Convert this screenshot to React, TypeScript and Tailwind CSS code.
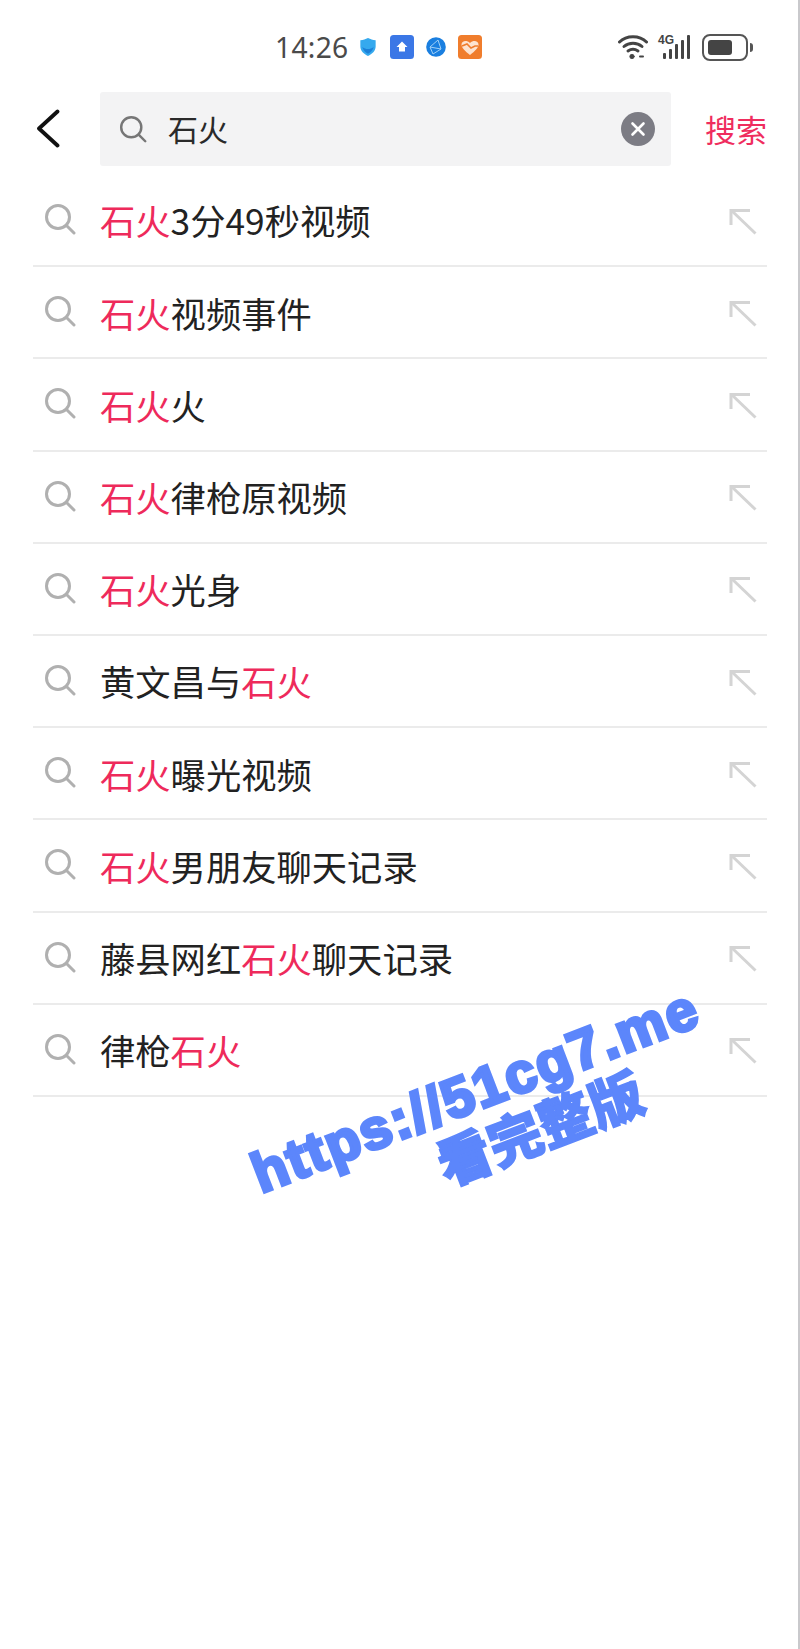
const font = { fontFamily: '"Noto Sans CJK SC", "Liberation Sans", sans-serif' };

function SearchIcon({ size, color, sw, className }: { size: number; color: string; sw: number; className?: string }) {
  return (
    <svg className={className} width={size} height={size} viewBox="0 0 32 32" fill="none" stroke={color} strokeWidth={sw} strokeLinecap="round">
      <circle cx="14" cy="14" r="11.5" />
      <path d="M23 23l7 7" />
    </svg>
  );
}

function Arrow() {
  return (
    <svg className="mt-[2px]" width="28" height="27" viewBox="0 0 28 27" fill="none" stroke="#d4d4d4" strokeWidth="3">
      <path d="M2 17V2.500H21" />
      <path d="M3 3l23.500 22.500" />
    </svg>
  );
}

const rows: [string, string, string][] = [
  ["", "石火", "3分49秒视频"],
  ["", "石火", "视频事件"],
  ["", "石火", "火"],
  ["", "石火", "律枪原视频"],
  ["", "石火", "光身"],
  ["黄文昌与", "石火", ""],
  ["", "石火", "曝光视频"],
  ["", "石火", "男朋友聊天记录"],
  ["藤县网红", "石火", "聊天记录"],
  ["律枪", "石火", ""],
];

function StatusBar() {
  return (
    <div className="flex h-[92px] items-center pt-[2px]">
      <span className="ml-[275px] w-[84px] text-[28.200px] leading-none tracking-[0.300px] text-[#4a4a4a]" style={{ fontFamily: '"Noto Sans", sans-serif' }}>14:26</span>
      <svg width="18" height="20" viewBox="0 0 20 22">
        <path d="M10 1c3 1.500 5 2 8.500 2.500v7c0 5-4 8.500-8.500 10.500-4.500-2-8.500-5.500-8.500-10.500v-7C5 3 7 2.500 10 1z" fill="#35a9ee" />
        <path d="M4 11c3 3 9 3 12 0v1c-1 3-3.500 5-6 6.500-2.500-1.500-5-3.500-6-6.500z" fill="#1c80d8" />
      </svg>
      <svg className="ml-[13px]" width="24" height="24" viewBox="0 0 24 24">
        <rect width="24" height="24" rx="3.500" fill="#3b77e6" />
        <path d="M12 6.500l5.500 5.500H15v4.500H9V12H6.500z" fill="#fff" />
      </svg>
      <svg className="ml-[12px]" width="20" height="20" viewBox="0 0 20 20">
        <circle cx="10" cy="10" r="9.800" fill="#1a7fe0" />
        <path d="M4 10l8-7 3 9-8 5zM4 10l11 2" stroke="#9fd0f7" strokeWidth="1" fill="none" />
      </svg>
      <svg className="ml-[12px]" width="24" height="24" viewBox="0 0 24 24">
        <rect width="24" height="24" rx="3.500" fill="#f07d2c" />
        <path d="M12 20C7 16 3.500 13 3.500 9.500 3.500 6 8.500 4.500 12 8c3.500-3.500 8.500-2 8.500 1.500S17 16 12 20z" fill="#fde3cf" />
        <path d="M4 11l5-2 4 4 4-2 3 0" stroke="#f07d2c" strokeWidth="1.600" fill="none" />
      </svg>
      <svg className="ml-[136px]" width="30" height="26" viewBox="0 0 30 26" fill="none" stroke="#444" strokeWidth="3" strokeLinecap="round">
        <path d="M1.500 8c7-7 20-7 27 0" />
        <path d="M6 12.500c5-4.500 13-4.500 18 0" />
        <path d="M10 17c3-2 7-2 10 0" />
        <circle cx="14" cy="22.500" r="2.200" fill="#444" strokeWidth="0.800" />
        <path d="M22 22.500h3" strokeWidth="2" />
      </svg>
      <div className="relative ml-[10px] h-[24px] w-[33px]">
        <span className="absolute left-0 top-[-1px] text-[12px] font-bold leading-none text-[#444]" style={{ fontFamily: '"Liberation Sans", sans-serif' }}>4G</span>
        <div className="absolute bottom-0 left-[5px] flex h-full items-end gap-[2.700px]">
          <div className="h-[6px] w-[3.200px] rounded-[1px] bg-[#444]" />
          <div className="h-[10px] w-[3.200px] rounded-[1px] bg-[#444]" />
          <div className="h-[15px] w-[3.200px] rounded-[1px] bg-[#444]" />
          <div className="h-[19px] w-[3.200px] rounded-[1px] bg-[#444]" />
          <div className="h-[24px] w-[3.200px] rounded-[1px] bg-[#444]" />
        </div>
      </div>
      <div className="ml-[11px] flex h-[27px] w-[46px] items-center rounded-[8px] border-2 border-[#555] p-[4px]">
        <div className="h-full w-[24px] rounded-[3px] bg-[#444]" />
      </div>
      <div className="ml-[2px] h-[9px] w-[3px] rounded-r-sm bg-[#555]" />
    </div>
  );
}

function Header() {
  return (
    <div className="flex h-[74px] items-center">
      <div className="flex w-[100px] justify-start pl-[36px]">
        <svg width="26" height="40" viewBox="0 0 26 40" fill="none" stroke="#111" strokeWidth="3.800" strokeLinecap="round" strokeLinejoin="round">
          <path d="M21.500 2.500L3 19.500l18.500 17" />
        </svg>
      </div>
      <div className="flex h-[74px] w-[571px] items-center rounded-[3px] bg-[#f3f3f4] pl-[19px] pr-[16px]">
        <SearchIcon size={28} color="#767676" sw={2.800} />
        <span className="ml-[21px] flex-1 pb-[2px] text-[30px] leading-none text-[#2a2a2a]">石火</span>
        <div className="flex h-[34px] w-[34px] items-center justify-center rounded-full bg-[#7c7c84]">
          <svg width="16" height="16" viewBox="0 0 16 16" stroke="#fff" strokeWidth="2.600" strokeLinecap="round">
            <path d="M2.500 2.500l11 11M13.500 2.500l-11 11" />
          </svg>
        </div>
      </div>
      <span className="ml-[34px] pb-[2px] text-[31px] leading-none text-[#ef2d5e]">搜索</span>
    </div>
  );
}

function Row({ row }: { row: [string, string, string] }) {
  return (
    <div className="flex h-[92.200px] items-center border-b-2 border-[#ebebeb] pl-[11px] pr-[10px]">
      <SearchIcon className="mb-[2px]" size={32} color="#b0b0b0" sw={3} />
      <div className="ml-[24px] flex-1 whitespace-nowrap text-[35.300px] leading-none text-[#222]">
        {row[0]}
        <span className="text-[#ee2a5b]">{row[1]}</span>
        {row[2]}
      </div>
      <Arrow />
    </div>
  );
}

export default function App() {
  return (
    <div className="relative h-[1649px] w-[800px] overflow-hidden border-r-2 border-[#c9c9cc] bg-white" style={font}>
      <StatusBar />
      <Header />
      <div className="mx-[33px] mt-[9px] w-[734px]">
        {rows.map((r, i) => (
          <Row key={i} row={r} />
        ))}
      </div>
      <div className="absolute left-[255px] top-[1060px] flex w-[460px] origin-center rotate-[-21deg] flex-col items-center text-[#5c86fb]">
        <span className="whitespace-nowrap text-[56px] font-bold leading-[58px] tracking-[2px] [-webkit-text-stroke:3.500px_#5c86fb]" style={{ fontFamily: '"Liberation Sans", sans-serif' }}>https://51cg7.me</span>
        <span className="ml-[94px] whitespace-nowrap text-[54px] font-black leading-[54px] [-webkit-text-stroke:1.500px_#5c86fb]">看完整版</span>
      </div>
    </div>
  );
}
